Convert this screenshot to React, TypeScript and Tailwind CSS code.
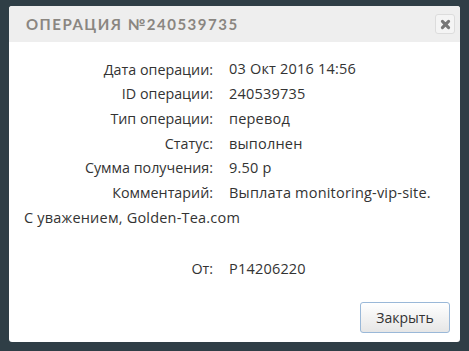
const rows = [
  { label: "Дата операции:", value: "03 Окт 2016 14:56" },
  { label: "ID операции:", value: "240539735" },
  { label: "Тип операции:", value: "перевод" },
  { label: "Статус:", value: "выполнен" },
  { label: "Сумма получения:", value: "9.50 р" },
  { label: "Комментарий:", value: "Выплата monitoring-vip-site." },
]

const Row = ({ label, value }: { label: string; value: string }) => (
  <div className="flex h-[24.7px] items-center">
    <div className="w-[204px] text-right text-[14.3px]">{label}</div>
    <div className="pl-[16px] whitespace-nowrap tracking-[0.2px]">{value}</div>
  </div>
)

export default function App() {
  return (
    <div className="w-[469px] h-[351px] bg-[#2f3e46] pt-[6px] pl-[9px]">
      <div className="w-[451px] h-[336px] bg-white rounded-[3px] flex flex-col overflow-hidden">
        <div className="h-[36px] bg-[#eeeeee] flex items-center justify-between pl-[17px] pr-[5px]">
          <span className="font-['Lato',sans-serif] font-bold text-[15px] tracking-[1.5px] text-[#8a8681]">
            ОПЕРАЦИЯ №240539735
          </span>
          <button className="w-[20px] h-[20px] rounded-[3px] border border-[#dcdcdc] bg-[#f4f4f4] flex items-center justify-center">
            <svg width="11" height="11" viewBox="0 0 10 10">
              <path d="M2.2 2.2 L7.8 7.8 M7.8 2.2 L2.2 7.8" stroke="#777" strokeWidth="2.8" strokeLinecap="round" />
            </svg>
          </button>
        </div>
        <div className="flex-1 flex flex-col pt-[15px] font-['Open_Sans',sans-serif] text-[14.5px] text-[#333]">
          {rows.map((r) => (
            <Row key={r.label} label={r.label} value={r.value} />
          ))}
          <div className="h-[24.7px] flex items-center pl-[15px] tracking-[0.2px]">С уважением, Golden-Tea.com</div>
          <div className="h-[27px]" />
          <Row label="От:" value="P14206220" />
          <div className="flex-1 flex items-end justify-end pr-[10px] pb-[9px]">
            <button className="w-[90px] h-[31px] rounded-[3px] border border-[#9ab8d8] bg-gradient-to-b from-white to-[#e6e6e6] font-['Open_Sans',sans-serif] text-[14px] text-[#333]">
              Закрыть
            </button>
          </div>
        </div>
      </div>
    </div>
  )
}
